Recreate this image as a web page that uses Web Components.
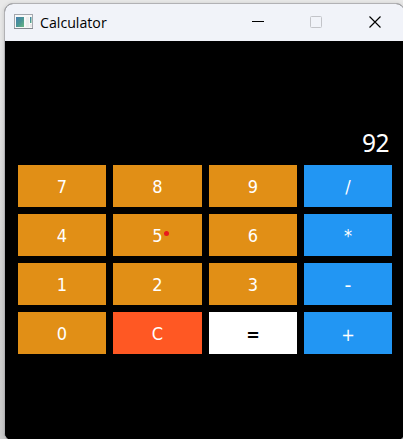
<!DOCTYPE html>
<html lang="en">
<head>
<meta charset="utf-8">
<title>Calculator</title>
<style>
html, body { margin: 0; height: 100%; overflow: hidden; }
body { background: linear-gradient(#e9e9e9, #e9e9e9 40px, #d2d2d2 300px, #cecece); }
</style>
</head>
<body>
<app-window caption="Calculator"><calc-pad value="92"></calc-pad></app-window>
<script>
class AppIcon extends HTMLElement {
  constructor() {
    super();
    this.attachShadow({ mode: 'open' }).innerHTML = `
      <style>:host { display: block; width: 19px; height: 15px; } svg { display: block; }</style>
      <svg width="19" height="15" viewBox="0 0 19 15">
        <defs><linearGradient id="g" x1="0" y1="0" x2="1" y2="1">
          <stop offset="0" stop-color="#477fb0"/><stop offset=".5" stop-color="#4a9496"/><stop offset="1" stop-color="#69b680"/>
        </linearGradient></defs>
        <rect x=".5" y=".5" width="18" height="14" fill="#f8f8f8" stroke="#a4a7ae"/>
        <path d="M0 14.5H19" stroke="#858990"/>
        <rect x="2" y="3" width="8" height="10" fill="url(#g)"/>
        <rect x="12" y="3" width="3" height="10" fill="#eeeeee"/>
        <rect x="16" y="3" width="1.5" height="6" fill="url(#g)"/>
        <rect x="16" y="10" width="2" height="3" fill="#e7e7e7"/>
      </svg>`;
  }
}
customElements.define('app-icon', AppIcon);

const GLYPHS = {
  minimize: '<path d="M1 5.5H13" stroke="#000"/>',
  maximize: '<rect x=".5" y=".5" width="11" height="11" rx="1" fill="none" stroke="#c3c4c9"/>',
  close: '<path d="M.5 .5L11.5 11.5M11.5 .5L.5 11.5" stroke="#000" stroke-width="1.15"/>'
};
class CaptionButton extends HTMLElement {
  constructor() {
    super();
    this.attachShadow({ mode: 'open' }).innerHTML = `
      <style>:host { display: grid; place-items: center; width: 59px; } svg { display: block; overflow: visible; }</style>
      <svg width="12" height="12" viewBox="0 0 12 12">${GLYPHS[this.getAttribute('kind')]}</svg>`;
  }
}
customElements.define('caption-button', CaptionButton);

class AppWindow extends HTMLElement {
  constructor() {
    super();
    this.attachShadow({ mode: 'open' }).innerHTML = `
      <style>
        :host { display: flex; flex-direction: column; box-sizing: border-box; width: 401px; height: 438px;
          margin: 3px 0 0 4px; border: 1px solid #b1b1b4; border-radius: 9px 9px 8px 8px; overflow: hidden;
          background: #000; box-shadow: 0 1px 5px rgba(0,0,0,.16); }
        header { display: flex; height: 37px; flex: none; background: #f1f3f9; padding-left: 9px; }
        app-icon { margin-top: 10px; }
        .caption { flex: 1; padding-left: 7px; font: 15px/37px "Open Sans", "Noto Sans", sans-serif; color: #000; }
        .caption span { display: inline-block; transform-origin: left; transform: scaleX(.945); }
        caption-button { height: 35px; }
      </style>
      <header>
        <app-icon></app-icon>
        <div class="caption"><span></span></div>
        <caption-button kind="minimize"></caption-button>
        <caption-button kind="maximize"></caption-button>
        <caption-button kind="close"></caption-button>
      </header>
      <slot></slot>`;
    this.shadowRoot.querySelector('.caption span').textContent = this.getAttribute('caption');
  }
}
customElements.define('app-window', AppWindow);

class CalcKey extends HTMLElement {
  constructor() {
    super();
    this.attachShadow({ mode: 'open' }).innerHTML = `
      <style>
        :host { display: grid; place-items: center; background: #e18f16; color: #fff; box-sizing: border-box;
          padding-top: 2px; position: relative; font: 18px/22px "DejaVu Sans", sans-serif; font-stretch: condensed; }
        :host([kind="op"]) { background: #2296f3; }
        :host([kind="clear"]) { background: #ff5823; }
        :host([kind="equals"]) { background: #fff; color: #000; font-weight: bold; }
        :host([low]) { padding-top: 4px; }
        i { display: none; }
        :host([marked]) i { display: block; position: absolute; left: 50.5px; top: 16.5px;
          width: 5px; height: 5px; border-radius: 50%; background: #e8191c; }
      </style>
      <span><slot></slot></span><i></i>`;
  }
}
customElements.define('calc-key', CalcKey);

class CalcPad extends HTMLElement {
  constructor() {
    super();
    this.attachShadow({ mode: 'open' }).innerHTML = `
      <style>
        :host { display: flex; flex-direction: column; flex: 1; background: #000; padding: 0 0 0 13px; }
        output { display: block; height: 124px; width: 371px; box-sizing: border-box; padding-top: 87px;
          text-align: right; color: #fff; font: 24.5px/30px "Noto Sans", sans-serif; letter-spacing: -.5px; }
        .keys { display: grid; grid-template-columns: 88px 89px 88px 88px; grid-auto-rows: 42px; gap: 7px; }
        .wide { font-size: 19px; font-stretch: normal; }
      </style>
      <output></output>
      <div class="keys">
        <calc-key>7</calc-key><calc-key>8</calc-key><calc-key>9</calc-key><calc-key kind="op">/</calc-key>
        <calc-key>4</calc-key><calc-key marked>5</calc-key><calc-key>6</calc-key><calc-key kind="op">*</calc-key>
        <calc-key>1</calc-key><calc-key>2</calc-key><calc-key>3</calc-key><calc-key kind="op" class="wide">-</calc-key>
        <calc-key>0</calc-key><calc-key kind="clear">C</calc-key><calc-key kind="equals" low>=</calc-key><calc-key kind="op" low>+</calc-key>
      </div>`;
    this.shadowRoot.querySelector('output').textContent = this.getAttribute('value');
  }
}
customElements.define('calc-pad', CalcPad);
</script>
</body>
</html>
